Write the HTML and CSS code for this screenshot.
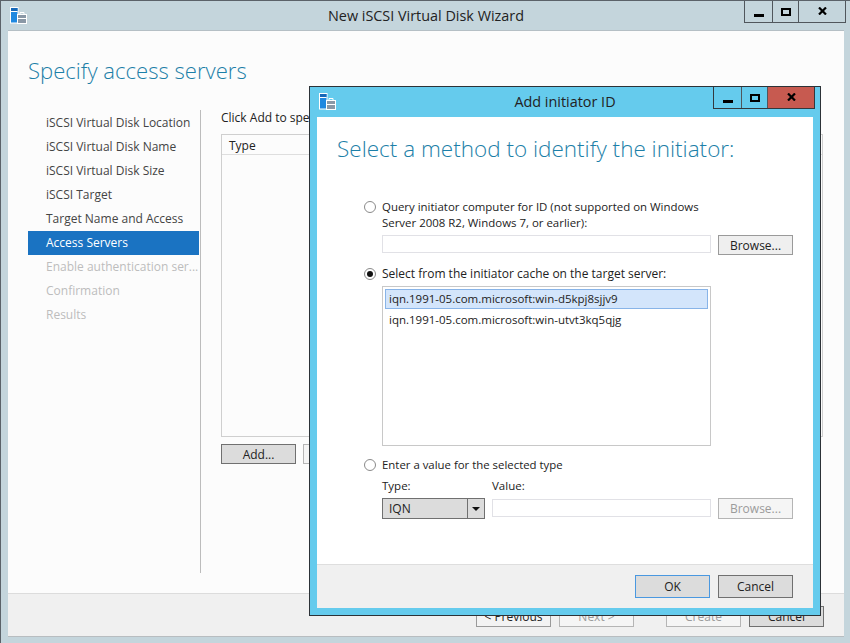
FILE: index.html
```html
<!DOCTYPE html>
<html lang="en">
<head>
  <meta charset="UTF-8">
  <title>New iSCSI Virtual Disk Wizard</title>
  <link rel="stylesheet" href="styles.css">
</head>
<body>

  <div class="window">
    <div class="titlebar main-titlebar">
      <svg class="app-icon" width="17" height="17" viewBox="0 0 17 17">
        <rect x="0.5" y="0.5" width="7.5" height="15.5" fill="#1e88e0" stroke="#fff"/>
        <rect x="1" y="1" width="6.5" height="3" fill="#1668b8"/>
        <rect x="1" y="4" width="6.5" height="1" fill="#fff"/>
        <rect x="7.5" y="7.5" width="9" height="9" fill="#8a98a6" stroke="#fff"/>
        <path d="M10 7.5V5.5H14V7.5M8 11.5H16" fill="none" stroke="#fff"/>
      </svg>
      <div class="title-text">New iSCSI Virtual Disk Wizard</div>
      <div class="caption-buttons">
        <div class="cap cap-min"><span class="glyph-min"></span></div>
        <div class="cap cap-max"><span class="glyph-max"></span></div>
        <div class="cap cap-close">
          <svg width="9" height="8" viewBox="0 0 9 8"><path d="M1 0.5L8 7.5M8 0.5L1 7.5" stroke="#000" stroke-width="2.2" fill="none"/></svg>
        </div>
      </div>
    </div>

    <div class="client">
      <h1 class="page-title">Specify access servers</h1>
      <div class="wizard-body">
        <ul class="steps">
          <li>iSCSI Virtual Disk Location</li>
          <li>iSCSI Virtual Disk Name</li>
          <li>iSCSI Virtual Disk Size</li>
          <li>iSCSI Target</li>
          <li>Target Name and Access</li>
          <li class="current">Access Servers</li>
          <li class="off">Enable authentication ser...</li>
          <li class="off">Confirmation</li>
          <li class="off">Results</li>
        </ul>
        <div class="pane">
          <div class="pane-intro">Click Add to specify iSCSI initiators</div>
          <div class="servers-table">
            <div class="servers-head">Type</div>
          </div>
          <div class="pane-buttons">
            <button class="btn btn-dark" type="button">Add...</button>
            <button class="btn" type="button" disabled>Remove</button>
          </div>
        </div>
      </div>
      <div class="wizard-footer">
        <button class="btn" type="button">&lt; Previous</button>
        <button class="btn" type="button" disabled>Next &gt;</button>
        <button class="btn btn-gap" type="button" disabled>Create</button>
        <button class="btn btn-dark" type="button">Cancel</button>
      </div>
    </div>
  </div>

  <div class="dialog">
    <div class="titlebar dialog-titlebar">
      <svg class="app-icon" width="17" height="17" viewBox="0 0 17 17">
        <rect x="0.5" y="0.5" width="7.5" height="15.5" fill="#1e88e0" stroke="#fff"/>
        <rect x="1" y="1" width="6.5" height="3" fill="#1668b8"/>
        <rect x="1" y="4" width="6.5" height="1" fill="#fff"/>
        <rect x="7.5" y="7.5" width="9" height="9" fill="#8a98a6" stroke="#fff"/>
        <path d="M10 7.5V5.5H14V7.5M8 11.5H16" fill="none" stroke="#fff"/>
      </svg>
      <div class="title-text">Add initiator ID</div>
      <div class="caption-buttons">
        <div class="cap cap-min"><span class="glyph-min"></span></div>
        <div class="cap cap-max"><span class="glyph-max"></span></div>
        <div class="cap cap-close red">
          <svg width="9" height="8" viewBox="0 0 9 8"><path d="M1 0.5L8 7.5M8 0.5L1 7.5" stroke="#000" stroke-width="2.2" fill="none"/></svg>
        </div>
      </div>
    </div>

    <div class="dialog-client">
      <div class="dialog-main">
        <h2 class="dialog-title">Select a method to identify the initiator:</h2>

        <div class="option option-query">
          <span class="radio"></span>
          <div>Query initiator computer for ID (not supported on Windows<br>Server 2008 R2, Windows 7, or earlier):</div>
        </div>
        <div class="input-row">
          <div class="textbox"></div>
          <button class="btn btn-browse" type="button">Browse...</button>
        </div>

        <div class="option option-cache">
          <span class="radio checked"></span>
          <div>Select from the initiator cache on the target server:</div>
        </div>
        <div class="cache-list">
          <div class="cache-item selected">iqn.1991-05.com.microsoft:win-d5kpj8sjjv9</div>
          <div class="cache-item">iqn.1991-05.com.microsoft:win-utvt3kq5qjg</div>
        </div>

        <div class="option option-value">
          <span class="radio"></span>
          <div>Enter a value for the selected type</div>
        </div>
        <div class="value-grid">
          <div class="field-label">Type:</div>
          <div class="field-label">Value:</div>
          <div></div>
          <div class="combo">
            <div class="combo-text">IQN</div>
            <div class="combo-arrow"></div>
          </div>
          <div class="textbox textbox-value"></div>
          <button class="btn btn-browse" type="button" disabled>Browse...</button>
        </div>
      </div>

      <div class="dialog-footer">
        <button class="btn btn-ok" type="button">OK</button>
        <button class="btn btn-dark btn-tall" type="button">Cancel</button>
      </div>
    </div>
  </div>

</body>
</html>
```

FILE: styles.css
```css
* {
  box-sizing: border-box;
}
html, body {
  height: 100%;
}
body {
  margin: 0;
  overflow: hidden;
  font-family: 'Open Sans', 'Noto Sans', sans-serif;
  font-size: 12px;
  color: #222;
  background: #c4d5dc;
}
h1, h2 {
  margin: 0;
  font-weight: 300;
  color: #1d7fa8;
}

/* main wizard window */
.window {
  width: 850px;
  height: 643px;
  display: flex;
  flex-direction: column;
  padding: 0 6px 6px 7px;
  background: #c4d5dc;
  border-top: 1px solid #5b6269;
  border-left: 1px solid #5b6269;
}
.titlebar {
  position: relative;
  display: flex;
  align-items: center;
  justify-content: center;
  flex: none;
  font-size: 14.4px;
  color: #222;
}
.main-titlebar {
  height: 29px;
}
.dialog-titlebar {
  height: 30px;
}
.app-icon {
  position: absolute;
  left: 2px;
  top: 6px;
}
.caption-buttons {
  position: absolute;
  top: 0;
  display: flex;
  height: 22px;
  border: 1px solid #50565c;
  border-top: 0;
}
.main-titlebar .caption-buttons {
  right: -2px;
}
.dialog-titlebar .caption-buttons {
  right: -2px;
  border-color: #33383d;
}
.cap {
  display: flex;
  align-items: center;
  justify-content: center;
}
.cap-min {
  width: 28px;
  border-right: 1px solid #50565c;
}
.cap-max {
  width: 26px;
  border-right: 1px solid #50565c;
}
.cap-close {
  width: 46px;
}
.cap-close svg {
  margin-top: -1px;
}
.red {
  background: #c75a50;
}
.glyph-min {
  width: 10px;
  height: 3px;
  margin-top: 7px;
  background: #000;
}
.glyph-max {
  width: 10px;
  height: 8px;
  border: 2px solid #000;
}

.client {
  flex: 1;
  display: flex;
  flex-direction: column;
  min-height: 0;
  background: #fcfcfc;
  border-top: 1px solid #b5bfc5;
  border-bottom: 1px solid #b8bdc0;
}
.page-title {
  height: 79px;
  padding: 22px 0 0 20px;
  font-size: 22.1px;
  line-height: 34px;
  white-space: nowrap;
}
.wizard-body {
  flex: 1;
  display: flex;
  min-height: 0;
  padding-bottom: 20px;
}
.steps {
  width: 193px;
  flex: none;
  margin: 0;
  padding: 1px 0 0 20px;
  list-style: none;
  border-right: 1px solid #bcbcbc;
}
.steps li {
  width: 171px;
  height: 24px;
  padding-left: 18px;
  line-height: 24px;
  color: #444;
  white-space: nowrap;
}
.steps .current {
  background: #1a73c2;
  color: #fff;
}
.steps .off {
  color: #bdbdbd;
}
.pane {
  flex: 1;
  padding: 0 0 0 20px;
}
.pane-intro {
  height: 24px;
  line-height: 16px;
  white-space: nowrap;
}
.servers-table {
  width: 602px;
  height: 303px;
  border: 1px solid #cfcfcf;
}
.servers-head {
  height: 20px;
  padding-left: 7px;
  line-height: 22px;
  border-bottom: 1px solid #dedede;
}
.pane-buttons {
  display: flex;
  gap: 7px;
  margin-top: 7px;
}
.pane-buttons .btn {
  height: 20px;
}
.wizard-footer {
  height: 43px;
  flex: none;
  display: flex;
  justify-content: flex-end;
  gap: 8px;
  padding: 12px 20px 0 0;
  background: #f0f0f0;
  border-top: 1px solid #dcdcdc;
}

.btn {
  width: 75px;
  height: 21px;
  padding: 0;
  font: inherit;
  line-height: 17px;
  color: #222;
  background: #f3f3f3;
  border: 1px solid #9a9a9a;
  border-radius: 0;
}
.btn:disabled {
  color: #9b9b9b;
  background: #f5f5f5;
  border-color: #b5b5b5;
}
.btn-dark {
  background: #dcdcdc;
  border-color: #707070;
}
.btn-gap {
  margin-left: 24px;
}

/* add initiator dialog, floats over the wizard */
.dialog {
  position: absolute;
  left: 309px;
  top: 86px;
  width: 512px;
  height: 530px;
  display: flex;
  flex-direction: column;
  padding: 0 7px 7px 7px;
  background: #65cbed;
  border: 1px solid #2c3237;
}
.dialog-titlebar .title-text {
  margin-top: -1px;
}
.dialog-client {
  flex: 1;
  display: flex;
  flex-direction: column;
  min-height: 0;
  background: #fff;
}
.dialog-main {
  flex: 1;
  padding: 16px 20px 0 65px;
}
.dialog-title {
  margin-left: -45px;
  height: 51px;
  font-size: 22.5px;
  line-height: 32px;
  white-space: nowrap;
}
.option {
  position: relative;
  line-height: 16px;
}
.option-query {
  margin-top: 15px;
  font-size: 11.45px;
}
.option-cache {
  margin-top: 11px;
}
.option-value {
  margin-top: 11px;
  font-size: 11.4px;
}
.radio {
  position: absolute;
  left: -18px;
  top: 2px;
  width: 12px;
  height: 12px;
  background: #fff;
  border: 1px solid #8a8a8a;
  border-radius: 50%;
}
.radio.checked::after {
  content: "";
  position: absolute;
  left: 2px;
  top: 2px;
  width: 6px;
  height: 6px;
  background: #111;
  border-radius: 50%;
}
.input-row {
  display: flex;
  justify-content: space-between;
  margin-top: 4px;
}
.textbox {
  width: 329px;
  height: 18px;
  background: #fff;
  border: 1px solid #e1e1e6;
}
.btn-browse {
  width: 75px;
}
.input-row .btn-browse {
  height: 20px;
  background: #efefef;
}
.cache-list {
  width: 329px;
  height: 160px;
  margin-top: 4px;
  padding: 2px 2px 0 2px;
  border: 1px solid #c8c8c8;
  font-size: 11.5px;
}
.cache-item {
  height: 20px;
  padding-left: 4px;
  line-height: 20px;
  white-space: nowrap;
}
.cache-item.selected {
  padding-left: 3px;
  margin-bottom: 1px;
  line-height: 18px;
  background: #d3e5fb;
  border: 1px solid #88b4e8;
}
.value-grid {
  display: grid;
  grid-template-columns: 110px 219px 75px;
  margin-top: 1px;
}
.value-grid .btn-browse {
  margin-left: 7px;
}
.field-label {
  height: 24px;
  line-height: 24px;
  font-size: 11.5px;
}
.combo {
  display: flex;
  width: 103px;
  height: 21px;
  background: #dcdcdc;
  border: 1px solid #707070;
}
.combo-text {
  flex: 1;
  padding-left: 6px;
  line-height: 19px;
  border-right: 1px solid #707070;
}
.combo-arrow {
  position: relative;
  width: 16px;
}
.combo-arrow::after {
  content: "";
  position: absolute;
  left: 4px;
  top: 8px;
  border-style: solid;
  border-width: 4px 4px 0 4px;
  border-color: #111 transparent transparent transparent;
}
.textbox-value {
  width: 219px;
  margin-top: 1px;
}
.dialog-footer {
  height: 44px;
  flex: none;
  display: flex;
  justify-content: flex-end;
  gap: 8px;
  padding: 10px 20px 0 0;
  background: #f0f0f0;
  border-top: 1px solid #dedede;
}
.btn-ok {
  height: 23px;
  background: #dcdcdc;
  border-color: #4a98e0;
}
.btn-tall {
  height: 23px;
}
```
